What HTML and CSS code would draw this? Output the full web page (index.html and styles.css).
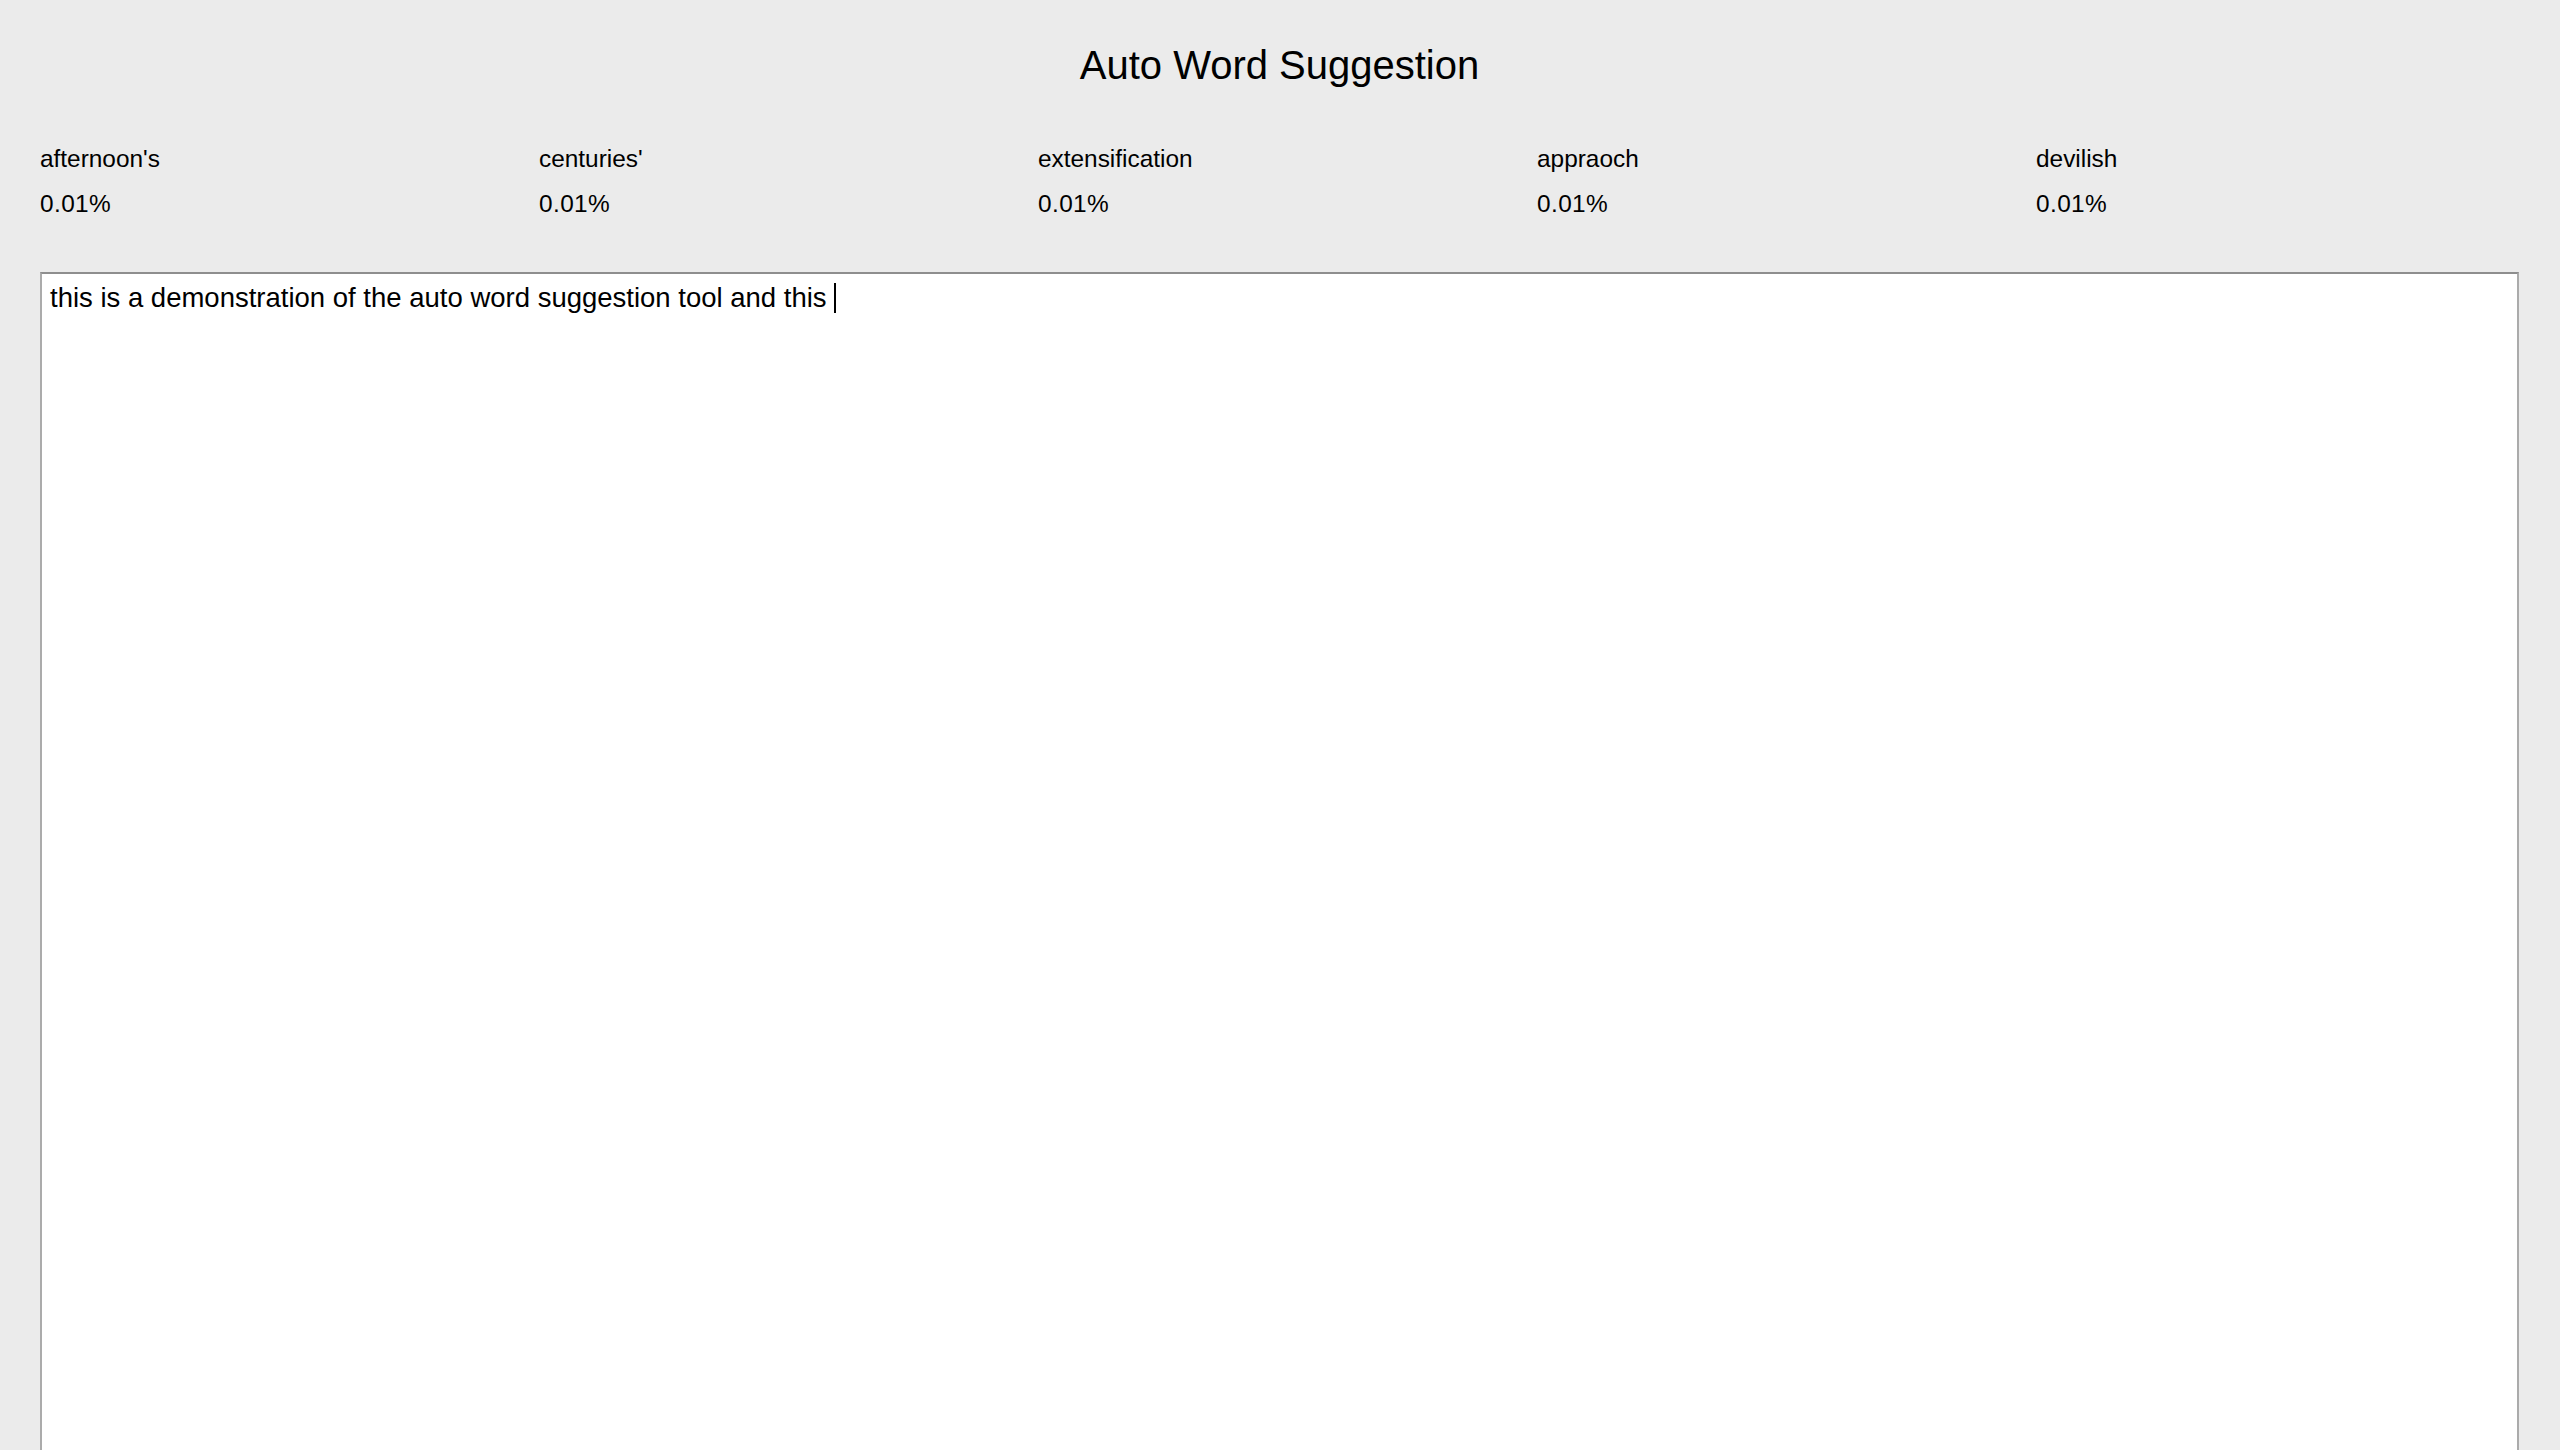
FILE: index.html
```html
<!DOCTYPE html>
<html lang="en">
<head>
<meta charset="utf-8">
<title>Auto Word Suggestion</title>
<link rel="stylesheet" href="styles.css">
</head>
<body>
<main class="app">
  <h1 class="title">Auto Word Suggestion</h1>
  <section class="suggestions">
    <div class="suggestion"><div class="word">afternoon's</div><div class="prob">0.01%</div></div>
    <div class="suggestion"><div class="word">centuries'</div><div class="prob">0.01%</div></div>
    <div class="suggestion"><div class="word">extensification</div><div class="prob">0.01%</div></div>
    <div class="suggestion"><div class="word">appraoch</div><div class="prob">0.01%</div></div>
    <div class="suggestion"><div class="word">devilish</div><div class="prob">0.01%</div></div>
  </section>
  <div class="editor">this is a demonstration of the auto word suggestion tool and this <span class="caret"></span></div>
</main>
</body>
</html>
```
FILE: styles.css
```css
html, body {
  margin: 0;
  padding: 0;
  overflow: hidden;
  background: #ebebeb;
}
body {
  font-family: "Liberation Sans", Arial, Helvetica, sans-serif;
  color: #000;
}
.app {
  padding: 0 41px 0 40px;
  display: flex;
  flex-direction: column;
}
.title {
  margin: 42px 0 0 0;
  font-size: 40px;
  font-weight: normal;
  line-height: 46px;
  text-align: center;
}
.suggestions {
  margin-top: 57px;
  display: grid;
  grid-template-columns: repeat(5, 499px);
}
.suggestion {
  display: flex;
  flex-direction: column;
  gap: 17px;
  font-size: 24.4px;
  line-height: 28px;
}
.word, .prob {
  white-space: nowrap;
}
.prob {
  letter-spacing: 0.4px;
}
.editor {
  margin-top: 54px;
  height: 1300px;
  background: #fff;
  border: 2px solid #ababab;
  border-top-color: #8e8e8e;
  padding: 8px 8px 6px;
  font-size: 27.5px;
  line-height: 31.6px;
  white-space: pre-wrap;
}
.caret {
  display: inline-block;
  width: 2px;
  height: 30px;
  background: #000;
  vertical-align: -6px;
}
```
